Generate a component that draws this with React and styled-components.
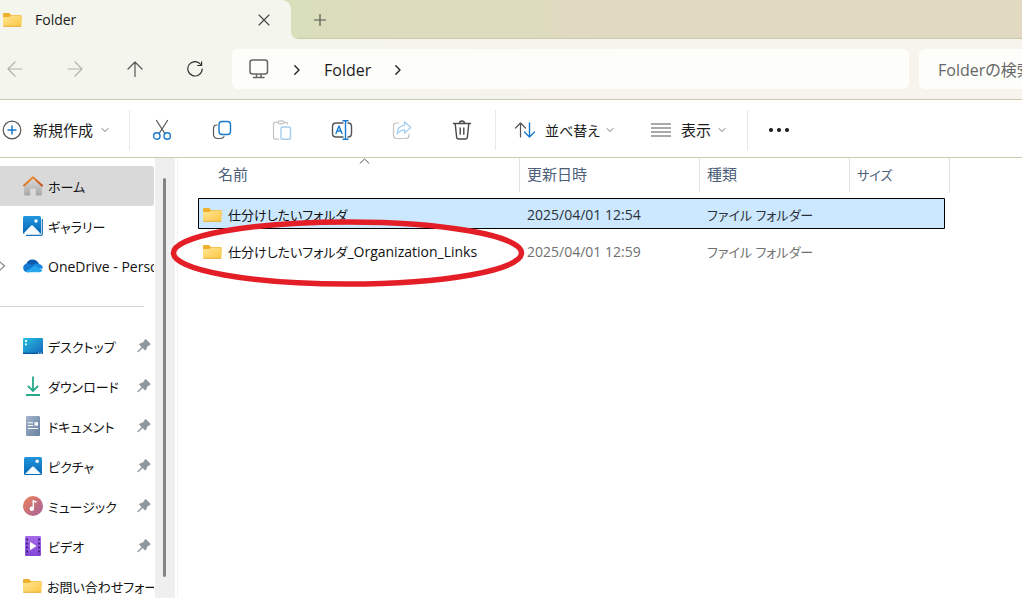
import React from "react";
import styled, { createGlobalStyle } from "styled-components";

const GlobalStyle = createGlobalStyle`
	* {
		box-sizing: border-box;
	}
	body {
		margin: 0;
		overflow: hidden;
		background: #fff;
	}
	body, button, input {
		font-family: "Open Sans", "Noto Sans CJK JP", sans-serif;
		font-size: 14px;
		font-feature-settings: "palt";
		color: #1b1b1b;
	}
	button {
		border: 0;
		padding: 0;
		background: none;
	}
	svg {
		display: block;
		flex: none;
	}
`;

const Window = styled.div`
	display: flex;
	flex-direction: column;
	height: 100vh;
	overflow: hidden;
`;

const TabBar = styled.div`
	display: flex;
	height: 39px;
	flex: none;
	background: linear-gradient(90deg, #d8dfb9 28%, #dddcbe 36%, #dddcbe 53%, #e1d9c2 55%);
`;

const Tab = styled.div`
	position: relative;
	display: flex;
	align-items: center;
	width: 291px;
	padding: 0 17px 0 3px;
	gap: 13px;
	background: #f4f5ec;
	border-top-right-radius: 9px;
	font-weight: 500;
	&::after {
		content: "";
		position: absolute;
		left: 100%;
		bottom: 0;
		width: 6px;
		height: 6px;
		background: radial-gradient(circle at 100% 0, transparent 5px, #f4f5ec 6px);
	}
`;

const TabTitle = styled.span`
	flex: 1;
`;

const IconButton = styled.button`
	display: flex;
	align-items: center;
	justify-content: center;
	width: ${(p) => p.$width || 20}px;
	height: 40px;
`;

const TabStrip = styled.div`
	display: flex;
	flex: 1;
	padding-left: 19px;
	border-bottom: 1px solid #cccba9;
`;

const NavBar = styled.div`
	display: flex;
	align-items: center;
	flex: none;
	height: 61px;
	background: linear-gradient(90deg, #f4f5ec 30%, #f5f4ec 50%, #f7f3ed 60%);
	border-bottom: 1px solid #cbcbae;
`;

const NavButtons = styled.div`
	display: flex;
	gap: 30px;
	padding-right: 22px;
`;

const AddressBar = styled.nav`
	display: flex;
	align-items: center;
	flex: 1;
	height: 40px;
	padding-left: 16px;
	background: #fdfefa;
	border-radius: 6px;
`;

const Crumb = styled.button`
	height: 40px;
	padding-top: 2px;
	font-size: 16px;
`;

const CrumbArrow = styled.span`
	display: flex;
	justify-content: center;
	width: 54px;
	padding-top: 1px;
`;

const SearchInput = styled.input`
	width: 103px;
	height: 40px;
	margin-left: 10px;
	padding: 2px 0 0 19px;
	border: 0;
	border-radius: 6px 0 0 6px;
	background: #fdfefa;
	font-size: 16px;
	&::placeholder {
		color: #666;
		opacity: 1;
	}
`;

const CommandBar = styled.div`
	display: flex;
	align-items: center;
	flex: none;
	height: 58px;
	padding: 2px 0 0 2px;
	background: #fff;
	border-bottom: 1px solid #cbcbae;
`;

const Command = styled.button`
	display: flex;
	align-items: center;
	height: 40px;
	gap: ${(p) => p.$gap || 9}px;
	padding-right: ${(p) => p.$end}px;
	font-size: ${(p) => (p.$small ? 14 : 15)}px;
	white-space: nowrap;
	& svg:last-child {
		margin-left: -3px;
	}
`;

const Divider = styled.span`
	width: 1px;
	height: 40px;
	margin-left: ${(p) => p.$before || 0}px;
	margin-right: ${(p) => p.$after}px;
	background: #e8e8e8;
`;

const Body = styled.div`
	display: flex;
	flex: 1;
	min-height: 0;
`;

const Sidebar = styled.nav`
	width: 155px;
	flex: none;
	padding-top: 8px;
	overflow: hidden;
`;

const PlaceList = styled.ul`
	margin: 0;
	padding: 0;
	list-style: none;
`;

const Place = styled.a`
	position: relative;
	display: flex;
	align-items: center;
	gap: 5px;
	height: 40px;
	margin-right: 1px;
	padding-left: 23px;
	border-radius: 0 3px 3px 0;
	background: ${(p) => (p.$active ? "#d9d9d9" : "transparent")};
	color: #111;
	font-size: ${(p) => (p.$latin ? 14 : 13)}px;
	text-decoration: none;
	white-space: nowrap;
`;

const PlaceName = styled.span`
	flex: 1;
	min-width: 0;
	overflow: hidden;
`;

const Expander = styled.span`
	position: absolute;
	left: -2px;
`;

const PinSlot = styled.span`
	padding-right: 3px;
`;

const Separator = styled.li`
	height: 40px;
	padding-top: 20px;
	&::before {
		content: "";
		display: block;
		width: 144px;
		border-top: 1px solid #d2d2d2;
	}
`;

const ScrollTrack = styled.div`
	width: 20px;
	flex: none;
	padding: 20px 9px 21px 8px;
	background: #efefef;
`;

const ScrollThumb = styled.div`
	height: 100%;
	border-radius: 2px;
	background: #858585;
`;

const Main = styled.main`
	flex: 1;
	min-width: 0;
	margin-left: 2px;
	border-left: 1px solid #f3f3f3;
	padding-left: 20px;
`;

const FileTable = styled.table`
	display: block;
	border-collapse: collapse;
	& thead {
		display: block;
	}
	& tbody {
		display: grid;
		gap: 6px;
		padding-top: 6px;
	}
`;

const HeadRow = styled.tr`
	display: grid;
	grid-template-columns: 312px 180px 150px 100px;
	height: 34px;
	margin-left: 10px;
`;

const HeadCell = styled.th`
	position: relative;
	padding: 5px 7px 0 ${(p) => p.$start || 7}px;
	border-right: 1px solid #e2e2e2;
	color: #4c607a;
	font-size: 15px;
	font-weight: 400;
	line-height: 22px;
	text-align: left;
	& svg {
		position: absolute;
		top: 0;
		left: 50%;
		margin-left: -5px;
	}
`;

const Kana = styled.span`
	font-size: 13px;
`;

const FileRow = styled.tr`
	position: relative;
	display: grid;
	grid-template-columns: 322px 180px 150px 95px;
	width: 747px;
	height: 31px;
	border-radius: 1px;
	background: ${(p) => (p.$selected ? "#cce8ff" : "transparent")};
	box-shadow: ${(p) => (p.$selected ? "inset 0 0 0 1px #000" : "none")};
	color: ${(p) => (p.$selected ? "#2b3138" : "#707070")};
`;

const FileCell = styled.td`
	display: flex;
	align-items: center;
	padding: 2px 7px 0;
`;

const NameCell = styled(FileCell)`
	gap: 6px;
	padding-left: 5px;
	color: #111;
`;

const Highlight = styled.svg`
	position: absolute;
	top: -16px;
	left: -29px;
	pointer-events: none;
`;

const Line = ({ w = 16, h = 16, color = "#555", width = 1.2, children }) => (
	<svg
		width={w}
		height={h}
		viewBox={`0 0 ${w} ${h}`}
		fill='none'
		stroke={color}
		strokeWidth={width}
		strokeLinecap='round'
		strokeLinejoin='round'
		aria-hidden='true'>
		{children}
	</svg>
);

const ChevronDown = () => (
	<Line w={8} h={6} color='#777' width={1}>
		<path d='M1 1.5L4 4.5L7 1.5' />
	</Line>
);

const ChevronRight = () => (
	<Line w={8} h={12} color='#222' width={1.4}>
		<path d='M1.8 1.8L6 6L1.8 10.2' />
	</Line>
);

const FolderIcon = () => (
	<svg width='19' height='16' viewBox='0 0 19 16' aria-hidden='true'>
		<defs>
			<linearGradient id='folder' x1='0' y1='0' x2='1' y2='1'>
				<stop offset='0' stopColor='#ffe594' />
				<stop offset='1' stopColor='#fcc845' />
			</linearGradient>
		</defs>
		<path d='M0 2.2Q0 1 1.2 1H6L8 3H17.5Q18.5 3 18.5 4V9H0Z' fill='#efb02e' />
		<path d='M0 5H6.3L8.3 3.4H17.5Q18.5 3.4 18.5 4.4V13.5Q18.5 14.6 17.4 14.6H1.1Q0 14.6 0 13.5Z' fill='url(#folder)' />
		<path d='M0.3 14.3H18.2' stroke='#e5a92c' strokeWidth='0.9' />
	</svg>
);

const Pin = () => (
	<PinSlot>
		<svg width='14' height='14' viewBox='0 0 14 14' aria-hidden='true'>
			<path
				d='M8 .8Q8.6.2 9.2.8L13 4.6Q13.6 5.3 12.8 5.8L9.9 7.5L8.9 10.6Q8.5 11.5 7.8 10.8L5.6 8.8L1.3 12.8L.7 13L.9 12.3L4.9 8L2.8 6Q2.1 5.2 3 4.8L6.2 3.8Z'
				fill='#8d979e'
				stroke='#8d979e'
				strokeWidth='.7'
			/>
		</svg>
	</PinSlot>
);

const Picture = ({ stacked }) => (
	<svg width='20' height='20' viewBox='0 0 20 20' aria-hidden='true'>
		<defs>
			<linearGradient id='picture' x1='0' y1='0' x2='0' y2='1'>
				<stop offset='0' stopColor='#2196dc' />
				<stop offset='1' stopColor='#0767b5' />
			</linearGradient>
		</defs>
		{stacked && <path d='M19.3 3V18Q19.3 19.3 18 19.3H3' fill='none' stroke='#1a73b8' strokeWidth='1.2' />}
		<rect x={stacked ? 0 : 1} y={stacked ? 0 : 1} width='18' height='18' rx='1.5' fill='url(#picture)' />
		<path d={stacked ? "M1 17L8.2 9.5Q9 8.8 9.8 9.5L17 17Q16.7 18 16 18H2Q1.2 18 1 17Z" : "M2 18L9.2 10.8Q10 10.1 10.8 10.8L18 18Z"} fill='#f4fbff' />
		<circle cx={stacked ? 13 : 14.2} cy={stacked ? 5 : 5.2} r='1.7' fill='#fff' />
	</svg>
);

const placeIcons = {
	home: (
		<svg width='20' height='20' viewBox='0 0 20 20' aria-hidden='true'>
			<defs>
				<linearGradient id='wall' x1='0' y1='0' x2='0' y2='1'>
					<stop offset='0' stopColor='#ddd' />
					<stop offset='1' stopColor='#a6a6a6' />
				</linearGradient>
				<linearGradient id='roof' x1='0' y1='0' x2='1' y2='1'>
					<stop offset='0' stopColor='#f0a13a' />
					<stop offset='1' stopColor='#c64a14' />
				</linearGradient>
			</defs>
			<path d='M1.2 9L10 1.5L18.8 9V18.4Q18.8 19.6 17.6 19.6H12.8V12.5H7.2V19.6H2.4Q1.2 19.6 1.2 18.4Z' fill='url(#wall)' />
			<path d='M1 9.5L10 1.3L19 9.5' fill='none' stroke='url(#roof)' strokeWidth='2' strokeLinecap='round' strokeLinejoin='round' />
		</svg>
	),
	gallery: <Picture stacked />,
	cloud: (
		<svg width='20' height='14' viewBox='0 0 20 14' aria-hidden='true'>
			<path d='M3 6Q4.3.5 9.5.5Q14 .5 16 5L10 9L4 8Z' fill='#0a5cae' />
			<path d='M.2 9Q0 5 4.5 4.5Q7 4.2 9 6L13 8.5L6 13.2H4Q.6 13 .2 9Z' fill='#1379d0' />
			<path d='M9 6.5Q11.5 3.8 15.5 4.8Q20 5.8 19.8 9.5L12 10Z' fill='#1688de' />
			<path d='M2 12.5L12 6.8L19.4 11Q18.6 13.3 16 13.3H4.5Q3 13.3 2 12.5Z' fill='#27a5ee' />
		</svg>
	),
	desktop: (
		<svg width='20' height='16' viewBox='0 0 20 16' aria-hidden='true'>
			<defs>
				<linearGradient id='desk' x1='0' y1='0' x2='1' y2='1'>
					<stop offset='0' stopColor='#28bfdc' />
					<stop offset='1' stopColor='#1467bd' />
				</linearGradient>
			</defs>
			<rect width='20' height='16' rx='1.3' fill='url(#desk)' />
			<path d='M2 3H4M2 6.3H4' stroke='#e5ffff' strokeWidth='1.8' />
			<path d='M0 15.3H20' stroke='#07579c' strokeWidth='1.3' />
			<path d='M15 15.2H16.2M17.5 15.2H18.7' stroke='#fff' />
		</svg>
	),
	download: (
		<svg width='20' height='20' viewBox='0 0 20 20' fill='none' stroke='#27a98a' strokeWidth='1.8' aria-hidden='true'>
			<path d='M10 .5V14.5M4.8 9.8L10 15L15.2 9.8M3 19H17' />
		</svg>
	),
	document: (
		<svg width='20' height='20' viewBox='0 0 20 20' aria-hidden='true'>
			<defs>
				<linearGradient id='doc' x1='0' y1='0' x2='1' y2='1'>
					<stop offset='0' stopColor='#a3b6cb' />
					<stop offset='1' stopColor='#657f9f' />
				</linearGradient>
			</defs>
			<rect x='3' width='14' height='20' rx='1.3' fill='url(#doc)' />
			<path d='M5 6.8H10M5 9.5H10M5 12.5H15' stroke='#fff' strokeWidth='1.1' />
			<rect x='11.5' y='6.2' width='3.5' height='3.5' fill='#fff' />
		</svg>
	),
	picture: <Picture />,
	music: (
		<svg width='20' height='20' viewBox='0 0 20 20' aria-hidden='true'>
			<defs>
				<linearGradient id='music' x1='0' y1='0' x2='1' y2='1'>
					<stop offset='0' stopColor='#ef8358' />
					<stop offset='1' stopColor='#a45f9f' />
				</linearGradient>
			</defs>
			<circle cx='10' cy='10' r='10' fill='url(#music)' />
			<circle cx='8.8' cy='12.7' r='2.2' fill='#fff' />
			<path d='M10.3 12.7V4.8L13.5 6.2' fill='none' stroke='#fff' strokeWidth='1.5' />
		</svg>
	),
	video: (
		<svg width='20' height='20' viewBox='0 0 20 20' aria-hidden='true'>
			<defs>
				<linearGradient id='film' x1='0' y1='0' x2='0' y2='1'>
					<stop offset='0' stopColor='#a66bea' />
					<stop offset='1' stopColor='#8446d6' />
				</linearGradient>
			</defs>
			<rect x='2' width='16' height='20' rx='1.3' fill='url(#film)' />
			<path d='M4 2.5V19M16 2.5V19' stroke='#3d1b80' strokeWidth='1.8' strokeDasharray='2 2' />
			<path d='M7 5.8L13.5 10L7 14.2Z' fill='#fff' />
		</svg>
	),
	folder: <FolderIcon />,
};

const places = [
	{ icon: "home", name: "ホーム", active: true },
	{ icon: "gallery", name: "ギャラリー" },
	{ icon: "cloud", name: "OneDrive - Perso", latin: true, expandable: true },
	null,
	{ icon: "desktop", name: "デスクトップ", pinned: true },
	{ icon: "download", name: "ダウンロード", pinned: true },
	{ icon: "document", name: "ドキュメント", pinned: true },
	{ icon: "picture", name: "ピクチャ", pinned: true },
	{ icon: "music", name: "ミュージック", pinned: true },
	{ icon: "video", name: "ビデオ", pinned: true },
	{ icon: "folder", name: "お問い合わせフォー" },
];

const files = [
	{ name: "仕分けしたいフォルダ", suffix: "", date: "2025/04/01 12:54", selected: true },
	{ name: "仕分けしたいフォルダ", suffix: "_Organization_Links", date: "2025/04/01 12:59", circled: true },
];

const actions = [
	{
		label: "切り取り",
		icon: (
			<Line w={20} h={22}>
				<path d='M4.5 1.5L13 14.8M15.5 1.5L7 14.8' />
				<g stroke='#1a78cc' strokeWidth='1.4'>
					<circle cx='4.8' cy='17' r='3.2' />
					<circle cx='15.2' cy='17' r='3.2' />
				</g>
			</Line>
		),
	},
	{
		label: "コピー",
		icon: (
			<Line w={20} h={20}>
				<path d='M5 5Q1.5 5 1.5 8.5V14Q1.5 18.5 6 18.5H8.5Q11 18.5 12 16.7' />
				<rect x='7' y='1.5' width='11.5' height='13' rx='3' stroke='#1a78cc' strokeWidth='1.4' />
			</Line>
		),
	},
	{
		label: "貼り付け",
		icon: (
			<Line w={20} h={20} color='#c3c3c3'>
				<path d='M6 2.3H3Q1.5 2.3 1.5 4V17.5Q1.5 19.2 3 19.2H6.5M12 2.3H14Q15.5 2.3 15.5 4' />
				<rect x='6' y='.8' width='6' height='3' rx='1.5' />
				<rect x='9' y='7' width='9.5' height='12.3' rx='1.5' stroke='#a4cdec' strokeWidth='1.4' />
			</Line>
		),
	},
	{
		label: "名前の変更",
		icon: (
			<Line w={22} h={20} color='#555' width={1.4}>
				<path d='M12 3H5Q1.5 3 1.5 6.5V13.5Q1.5 17 5 17H12M17 3Q20.5 3 20.5 6.5V13.5Q20.5 17 17 17' />
				<g stroke='#1a78cc'>
					<path d='M5 13.5L8 6L11 13.5M6 11H10M14.5 1V19M12 .8H17M12 19.2H17' />
				</g>
			</Line>
		),
	},
	{
		label: "共有",
		icon: (
			<Line w={20} h={20} color='#c3c3c3'>
				<path d='M7 3H4.5Q1.5 3 1.5 6V15.5Q1.5 18.5 4.5 18.5H14Q17 18.5 17 15.5V14' />
				<path d='M12.5 1.8L18.8 7.5L12.5 13V9.8Q8 9.8 5 14Q5.5 6 12.5 5.2Z' stroke='#a4cdec' />
			</Line>
		),
	},
	{
		label: "削除",
		icon: (
			<Line w={20} h={20} color='#4a4a4a' width={1.4}>
				<path d='M1.5 3.5H18.5M7.5 3.2Q7.5 1 10 1Q12.5 1 12.5 3.2M3.2 3.5L4.6 17Q4.8 19 6.8 19H13.2Q15.2 19 15.4 17L16.8 3.5M8.2 8V14.2M11.8 8V14.2' />
			</Line>
		),
	},
];

const place = ({ icon, name, active, latin, expandable, pinned }) => (
	<li key={name}>
		<Place href='#' $active={active} $latin={latin}>
			{expandable && (
				<Expander>
					<Line w={8} h={12} color='#888'>
						<path d='M1.5 1.5L6.5 6L1.5 10.5' />
					</Line>
				</Expander>
			)}
			{placeIcons[icon]}
			<PlaceName>{name}</PlaceName>
			{pinned && <Pin />}
		</Place>
	</li>
);

const Tabs = () => (
	<TabBar>
		<Tab>
			<FolderIcon />
			<TabTitle>Folder</TabTitle>
			<IconButton aria-label='閉じる'>
				<Line w={12} h={12} color='#444' width={1.1}>
					<path d='M1 1L11 11M11 1L1 11' />
				</Line>
			</IconButton>
		</Tab>
		<TabStrip>
			<IconButton aria-label='新しいタブ'>
				<Line w={12} h={12} color='#555'>
					<path d='M6 .5V11.5M.5 6H11.5' />
				</Line>
			</IconButton>
		</TabStrip>
	</TabBar>
);

const Navigation = () => (
	<NavBar>
		<NavButtons>
			<IconButton $width={30} aria-label='戻る'>
				<Line color='#b3b3ad'>
					<path d='M15 8H1M8 1L1 8L8 15' />
				</Line>
			</IconButton>
			<IconButton $width={30} aria-label='進む'>
				<Line color='#b3b3ad'>
					<path d='M1 8H15M8 1L15 8L8 15' />
				</Line>
			</IconButton>
			<IconButton $width={30} aria-label='上へ'>
				<Line>
					<path d='M8 15.5V1M1 8L8 1L15 8' />
				</Line>
			</IconButton>
			<IconButton $width={30} aria-label='更新'>
				<Line color='#333'>
					<path d='M13.8 3.5A7.2 7.2 0 1 0 15.2 8M14.6 .8V4.5H10.6' />
				</Line>
			</IconButton>
		</NavButtons>
		<AddressBar aria-label='アドレス'>
			<Line w={22} h={20} color='#666' width={1.5}>
				<rect x='2' y='1' width='17.5' height='14' rx='2.5' />
				<path d='M8.5 15.5V18M13 15.5V18M5.5 18.5H16' />
			</Line>
			<CrumbArrow>
				<ChevronRight />
			</CrumbArrow>
			<Crumb>Folder</Crumb>
			<CrumbArrow>
				<ChevronRight />
			</CrumbArrow>
		</AddressBar>
		<SearchInput aria-label='検索' placeholder='Folderの検索' />
	</NavBar>
);

const Commands = () => (
	<CommandBar>
		<Command $gap={11} $end={20}>
			<Line w={20} h={20}>
				<circle cx='10' cy='10' r='8.8' />
				<path d='M10 6V14M6 10H14' stroke='#1a78cc' strokeWidth='1.5' />
			</Line>
			新規作成
			<ChevronDown />
		</Command>
		<Divider $after={2} />
		{actions.map((a) => (
			<IconButton key={a.label} $width={60} aria-label={a.label}>
				{a.icon}
			</IconButton>
		))}
		<Divider $before={3} $after={18} />
		<Command $small $end={37}>
			<Line w={22} h={18}>
				<path d='M6.5 16V2M1.5 7L6.5 2L11.5 7' />
				<path d='M15.5 2V16M10.5 11L15.5 16L20.5 11' stroke='#1a78cc' strokeWidth='1.4' />
			</Line>
			並べ替え
			<ChevronDown />
		</Command>
		<Command $gap={10} $end={21}>
			<Line w={20} h={14}>
				<path d='M.5 1H19.5M.5 5H19.5M.5 9H19.5M.5 13H19.5' />
			</Line>
			表示
			<ChevronDown />
		</Command>
		<Divider $after={1} />
		<IconButton $width={60} aria-label='もっと見る'>
			<svg width='22' height='6' viewBox='0 0 22 6' fill='#1b1b1b' aria-hidden='true'>
				<circle cx='3' cy='3' r='2.1' />
				<circle cx='11' cy='3' r='2.1' />
				<circle cx='19' cy='3' r='2.1' />
			</svg>
		</IconButton>
	</CommandBar>
);

const Files = () => (
	<FileTable>
		<thead>
			<HeadRow>
				<HeadCell $start={10}>
					名前
					<Line w={11} h={6} color='#555' width={1}>
						<path d='M1 5.3L5.5 1L10 5.3' />
					</Line>
				</HeadCell>
				<HeadCell>更新日時</HeadCell>
				<HeadCell>種類</HeadCell>
				<HeadCell>
					<Kana>サイズ</Kana>
				</HeadCell>
			</HeadRow>
		</thead>
		<tbody>
			{files.map((f) => (
				<FileRow key={f.date} $selected={f.selected}>
					<NameCell>
						<FolderIcon />
						<span>
							<Kana>{f.name}</Kana>
							{f.suffix}
						</span>
						{f.circled && (
							<Highlight width='358' height='70' viewBox='0 0 358 70' aria-hidden='true'>
								<ellipse cx='178.5' cy='34' rx='174' ry='31' fill='none' stroke='#e31e26' strokeWidth='5.5' />
							</Highlight>
						)}
					</NameCell>
					<FileCell>{f.date}</FileCell>
					<FileCell>
						<Kana>ファイル フォルダー</Kana>
					</FileCell>
					<FileCell />
				</FileRow>
			))}
		</tbody>
	</FileTable>
);

const App = () => (
	<Window>
		<GlobalStyle />
		<Tabs />
		<Navigation />
		<Commands />
		<Body>
			<Sidebar>
				<PlaceList>{places.map((p) => (p ? place(p) : <Separator key='separator' />))}</PlaceList>
			</Sidebar>
			<ScrollTrack>
				<ScrollThumb />
			</ScrollTrack>
			<Main>
				<Files />
			</Main>
		</Body>
	</Window>
);

export default App;
